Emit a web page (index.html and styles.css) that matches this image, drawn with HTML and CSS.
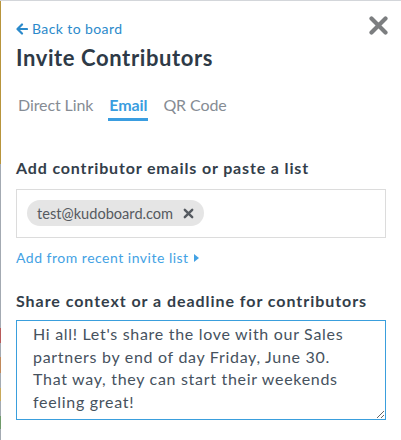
FILE: index.html
```html
<!DOCTYPE html>
<html lang="en">
<head>
  <meta charset="UTF-8" />
  <meta name="viewport" content="width=device-width, initial-scale=1" />
  <title>Invite Contributors</title>
  <link rel="stylesheet" href="styles.css">
</head>
<body>
  <div class="page">
    <!-- strip of the board behind the panel -->
    <div class="edge"></div>

    <div class="panel">
      <div class="top">
        <div class="heading">
          <a class="back" href="#">
            <svg width="12" height="12" viewBox="0 0 12 12"><path d="M11 6H2M6 1.5L1.5 6 6 10.5" fill="none" stroke="currentColor" stroke-width="2.2" stroke-linecap="round" stroke-linejoin="round"/></svg>
            Back to board
          </a>
          <h1 class="title">Invite Contributors</h1>
        </div>
        <button class="close" aria-label="Close">
          <svg width="19" height="19" viewBox="0 0 19 19"><path d="M2.5 2.5L16.5 16.5M16.5 2.5L2.5 16.5" stroke="currentColor" stroke-width="4.2" stroke-linecap="round"/></svg>
        </button>
      </div>

      <nav class="tabs">
        <a class="tab" href="#">Direct Link</a>
        <a class="tab active" href="#">Email</a>
        <a class="tab" href="#">QR Code</a>
      </nav>

      <label class="field-label">Add contributor emails or paste a list</label>
      <div class="email-box">
        <span class="chip">
          test@kudoboard.com
          <svg width="11" height="11" viewBox="0 0 11 11"><path d="M1.8 1.8L9.2 9.2M9.2 1.8L1.8 9.2" stroke="currentColor" stroke-width="2.4" stroke-linecap="round"/></svg>
        </span>
      </div>
      <a class="recent" href="#">
        Add from recent invite list
        <svg width="5" height="8" viewBox="0 0 5 8"><path d="M0 0L5 4 0 8Z" fill="currentColor"/></svg>
      </a>

      <label class="field-label second">Share context or a deadline for contributors</label>
      <textarea class="message">Hi all! Let's share the love with our Sales partners by end of day Friday, June 30. That way, they can start their weekends feeling great!</textarea>
    </div>
  </div>
</body>
</html>
```

FILE: styles.css
```css
body {
  margin: 0;
  font-family: 'Lato', 'Open Sans', sans-serif;
  letter-spacing: 0.4px;
  background-color: #fff;
  color: #2f3b47;
}
.page {
  display: flex;
  min-height: 440px;
  border-top: 1px solid #d3d6da;
  box-sizing: border-box;
}
.edge {
  width: 1px;
  flex: none;
  background: linear-gradient(to bottom,
    #b8953c 0, #b8953c 163px,
    #a3aab2 163px, #a3aab2 327px,
    #b85a5a 327px, #b85a5a 342px,
    #a3aab2 342px, #a3aab2 356px,
    #c0895a 356px, #c0895a 372px,
    #a3aab2 372px, #a3aab2 387px,
    #c8a95a 387px, #c8a95a 400px,
    #a3aab2 400px, #a3aab2 415px,
    #6f9a6a 415px, #6f9a6a 428px,
    #a3aab2 428px);
}
.panel {
  flex: 1;
  padding: 19px 15px 0 15px;
  display: flex;
  flex-direction: column;
}
.top {
  display: flex;
  justify-content: space-between;
  align-items: flex-start;
}
.back {
  display: flex;
  align-items: center;
  gap: 4px;
  font-size: 14px;
  line-height: 18px;
  color: #2b8acb;
  text-decoration: none;
}
.title {
  margin: 6px 0 0 0;
  font-size: 22px;
  line-height: 28px;
  font-weight: 700;
  letter-spacing: 0.6px;
  color: #2e3a47;
}
.close {
  border: none;
  background: none;
  padding: 0;
  margin: -4px -2px 0 0;
  color: #7c7e80;
  cursor: pointer;
}
.close svg {
  display: block;
}
.tabs {
  display: flex;
  gap: 14px;
  margin: 23px 0 0 1px;
  letter-spacing: -0.1px;
}
.tab {
  padding: 0 1px 3px 1px;
  font-size: 16px;
  line-height: 20px;
  color: #868c94;
  text-decoration: none;
  border-bottom: 3px solid transparent;
}
.tab.active {
  color: #3a9de0;
  font-weight: 700;
  border-bottom-color: #3a9de0;
}
.field-label {
  display: block;
  margin-top: 37px;
  font-size: 16px;
  line-height: 20px;
  font-weight: 700;
  letter-spacing: 0.85px;
  color: #333e4a;
}
.field-label.second {
  margin-top: 24px;
  letter-spacing: 0.95px;
}
.email-box {
  margin-top: 11px;
  height: 49px;
  box-sizing: border-box;
  border: 1px solid #dcdcdc;
  padding: 10px;
}
.chip {
  display: inline-flex;
  align-items: center;
  gap: 10px;
  height: 26px;
  padding: 0 10px;
  border-radius: 13px;
  background-color: #e5e5e5;
  font-size: 14.6px;
  letter-spacing: 0;
  color: #555a60;
}
.recent {
  display: flex;
  align-items: center;
  gap: 5px;
  margin-top: 11px;
  font-size: 14px;
  line-height: 18px;
  letter-spacing: 0.5px;
  color: #43a2e4;
  text-decoration: none;
}
.message {
  margin-top: 9px;
  height: 100px;
  box-sizing: border-box;
  padding: 2px 30px 2px 16px;
  border: 1px solid #3a9fdd;
  border-radius: 0;
  font-family: inherit;
  font-size: 16px;
  line-height: 22.7px;
  letter-spacing: 0.7px;
  color: #46525e;
  outline: none;
}
```
